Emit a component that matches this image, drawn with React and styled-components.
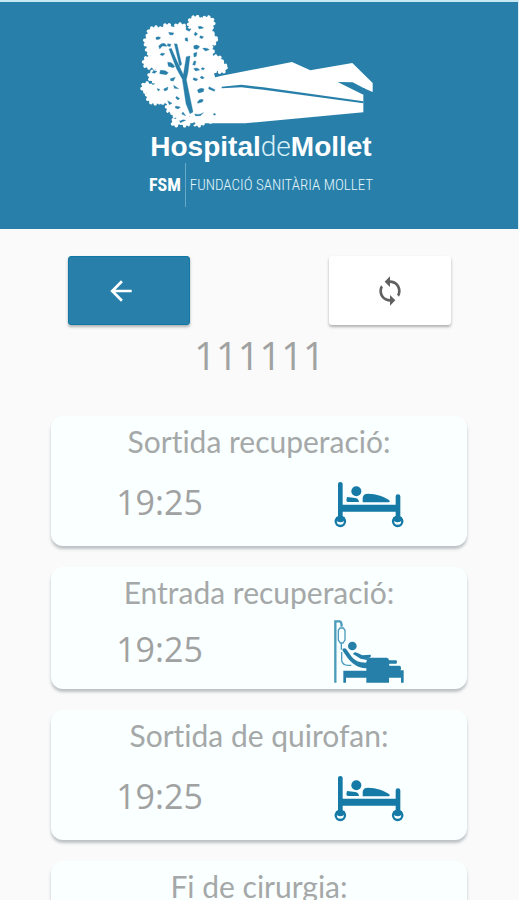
import React from "react";
import styled, { createGlobalStyle } from "styled-components";
import { MdArrowBack, MdSync } from "react-icons/md";

const GlobalStyle = createGlobalStyle`
  * { box-sizing: border-box; }
  body {
    margin: 0;
    background: #fafafa;
    color: #a5a8a8;
    font-family: Lato, "Open Sans", sans-serif;
    font-variant-ligatures: none;
  }
`;

const Screen = styled.div`
  display: flex;
  flex-direction: column;
  height: 100vh;
  overflow: hidden;
`;

const Header = styled.header`
  display: flex;
  flex-direction: column;
  align-items: center;
  padding: 13px 0 22px;
  background: #2880aa;
  border-top: 2px solid #c5e8f3;
  border-right: 1px solid #dceef4;
  color: #fff;
  font-family: "Liberation Sans", Arial, sans-serif;
`;

const Artwork = styled.svg`
  display: block;
  width: 234px;
  height: 114px;
  overflow: visible;
`;

const Brand = styled.div`
  margin-top: 2px;
  padding-left: 4px;
  font-size: 28px;
  line-height: 32px;
  font-weight: 700;
`;

const BrandLight = styled.span`
  font-family: Roboto, sans-serif;
  font-weight: 300;
  color: #d9f0f8;
`;

const Foundation = styled.div`
  display: flex;
  align-items: center;
  padding-left: 4px;
  font-family: "Roboto Condensed", "Liberation Sans Narrow", "Liberation Sans", sans-serif;
  font-size: 15px;
  font-weight: 300;
  line-height: 44px;
  color: #e4f5fb;
`;

const Initials = styled.strong`
  padding-right: 4px;
  font-size: 18px;
  font-weight: 700;
  color: #fff;
`;

const Divider = styled.span`
  width: 1px;
  height: 44px;
  margin-right: 4px;
  background: #68a9c7;
`;

const Toolbar = styled.nav`
  display: flex;
  justify-content: space-between;
  padding: 27px 68px 0;
`;

const ToolButton = styled.button`
  display: flex;
  align-items: center;
  justify-content: center;
  width: 122px;
  height: 69px;
  padding: 0 ${(p) => (p.$primary ? "16px" : "0")} 0 0;
  border: ${(p) => (p.$primary ? "1px solid #0f78a5" : "0")};
  border-radius: 3px;
  background: ${(p) => (p.$primary ? "#2880aa" : "#fff")};
  color: ${(p) => (p.$primary ? "#fff" : "#606060")};
  font-size: 32px;
  box-shadow: 0 2px 3px rgba(0, 0, 0, 0.3);
  cursor: pointer;
`;

const PatientCode = styled.h1`
  margin: 0;
  padding: 6px 0 0;
  font-family: "Open Sans", sans-serif;
  font-size: 38px;
  line-height: 48px;
  font-weight: 400;
  color: #a0a2a2;
  text-align: center;
`;

const EventList = styled.main`
  display: flex;
  flex: 1;
  flex-direction: column;
  gap: 21px;
  min-height: 0;
  padding: 37px 52px 0 51px;
  overflow-y: auto;
  scrollbar-width: none;
`;

const EventCard = styled.section`
  flex: none;
  padding-top: 6px;
  border-radius: 12px;
  background: #faffff;
  box-shadow: 0 3px 3px rgba(60, 75, 85, 0.32);
`;

const EventTitle = styled.h2`
  margin: 0;
  font-size: 30px;
  line-height: 38px;
  font-weight: 400;
  text-align: center;
`;

const EventRow = styled.div`
  display: grid;
  grid-template-columns: 1fr 1fr;
  column-gap: 12px;
  align-items: center;
  justify-items: center;
  padding: 8px 0 6px 10px;
`;

const EventTime = styled.time`
  padding-bottom: 4px;
  font-family: "Open Sans", sans-serif;
  font-size: 34px;
  line-height: 44px;
  color: #a0a2a2;
`;

const EventIcon = styled.svg`
  display: block;
  width: 72px;
  height: ${(p) => p.$height}px;
  color: #157ba6;
`;

const leafClusters = [
  [78, 107, 30], [60, 125, 20], [112, 90, 20], [150, 92, 24], [198, 72, 26], [232, 70, 23],
  [224, 100, 28], [243, 119, 20], [196, 110, 34], [150, 128, 42], [105, 138, 38], [68, 148, 22],
  [58, 187, 21], [88, 184, 29], [120, 195, 30], [225, 155, 28], [257, 188, 24], [274, 203, 18],
  [220, 200, 42], [172, 180, 52], [73, 229, 20], [105, 232, 38], [50, 263, 18], [76, 285, 30],
  [100, 275, 38], [150, 255, 48], [210, 260, 53], [127, 322, 21], [155, 318, 42], [220, 310, 44],
  [137, 367, 14], [166, 361, 20], [205, 358, 23], [242, 340, 30],
];

const leafGaps = [
  "M78 112q8-4 14 1-4 8-14 5z", "M116 97l16 2-4 6-9-1z", "M169 80l8 7 6-1-5 8-10-5z",
  "M204 80q10-4 17 4l-13 3z", "M196 96l7 6-6 5-5-3z", "M211 107l10 3-5 6-7-3z",
  "M86 138q10-12 19-7l6 8-14-1-8 9z", "M95 159l10 2-7 6-8-3z", "M113 131l10 2-3 7-8-3z",
  "M165 115l7-2 2 11-8-2z", "M191 138q9-7 18 2l-7 8-10-2z",
  "M191 160l10-3-2 12-7 2z", "M192 183l6 1-3 12-7-2z", "M218 145q12-3 20 4l-12 4z",
  "M71 212l10 2-7 6-8-2z", "M91 211q14-2 24 7l-6 6-20-3z", "M113 187q14-1 21 13l-5 3-14-4z",
  "M121 236l15-4-6 11-8-1z", "M101 267l13-6-2 9-8 3z",
  "M131 256l15 10-13-1z", "M191 206q11-6 18 4l-12 3z", "M216 203l8 2-4 5-7-3z",
  "M191 233l12 4-4 6-10-4z", "M216 228l7 6-7 3-6-5z", "M237 260l18 9-2 5-17-7z",
  "M202 271q9-10 20-4l-2 8-14 4z", "M203 305q7-10 17-6l-3 7-14 4z",
  "M140 289l9 7-5 4-7-6z", "M113 302l13 8-8 4z", "M137 318l14 3-6 6-9-3z",
  "M117 335l6 10-9-4z", "M159 336l8 11-12-5z", "M194 342q15 4 27-4l-10 9-14 1z",
  "M149 364q10-8 18-3l-16 7z", "M179 376l14-9 3 4-11 8z", "M252 340l5 2-2 4-5-2z",
  "M82 265l8 4-6 4z", "M174 280l-5 8-3-8z",
];

function HospitalArtwork() {
  return (
    <Artwork viewBox="36 45 702 342" role="img" aria-label="Hospital de Mollet">
      <path
        fill="#fff"
        d="M235 237L275 227 486 186 541 211 667 189 728 249V276L700 264V337L345 370H180V245Z"
      />
      <path fill="#2880aa" d="M623 246L668 247 708 268 700 284Z" />
      <path fill="#2880aa" d="M275 260L334 254 400 262 700 304V310L400 269 334 262 275 265Z" />
      <g fill="#fff" stroke="#fff" strokeWidth="9" strokeLinecap="round" strokeDasharray="1 13">
        {leafClusters.map(([cx, cy, r]) => (
          <circle key={`${cx}-${cy}`} cx={cx} cy={cy} r={r - 3} />
        ))}
      </g>
      <g fill="#2880aa" stroke="#2880aa" strokeWidth="1" strokeLinejoin="round">
        <path d="M117 147L124 145 141 184 160 224 169 170 180 168 174 217 169 239 189 336 180 341 168 311 157 238 139 205Z" />
        <path d="M133 131L141 132 155 193 149 199Z" />
        {leafGaps.map((d) => (
          <path key={d} d={d} />
        ))}
      </g>
    </Artwork>
  );
}

function BedIcon() {
  return (
    <EventIcon $height={72} viewBox="36 -6 216 216" aria-hidden="true">
      <g fill="currentColor">
        <path d="M51 41Q51 36 58 36T65 41V104H224V79Q224 73 231 73T238 79V141H224V125H65V141H51Z" />
        <circle cx="106" cy="64" r="15" />
        <path d="M78 81L103 84Q113 86 114 96H81Q76 96 76 91Z" />
        <path d="M125 97V84Q126 71 141 71C166 71 191 80 206 92Q208 97 202 97Z" />
      </g>
      <g fill="#faffff" stroke="currentColor" strokeWidth="7">
        <circle cx="58" cy="154" r="14" />
        <circle cx="230" cy="154" r="14" />
      </g>
      <path fill="currentColor" d="M45 141H71V150Q67 157 58 157T45 150ZM217 141H243V150Q239 157 230 157T217 150Z" />
    </EventIcon>
  );
}

function RecoveryIcon() {
  return (
    <EventIcon $height={64} viewBox="36 26 216 192" aria-hidden="true">
      <g fill="none" stroke="#4c9bbc">
        <path strokeWidth="7" d="M43 217V33H56Q62 34 62 49" />
        <path strokeWidth="4" d="M57 53H67L72 60V89L66 98H58L52 89V60ZM61 98V118M62 125V151Q65 165 81 165H91" />
      </g>
      <g fill="#267fa9">
        <circle cx="94" cy="107" r="13" />
        <path d="M96 131Q99 123 108 127L124 135 148 133Q153 138 145 142L132 146 147 142H198Q204 144 204 150H226Q231 155 226 160H205V166H237Q243 172 238 180H248V217H240V202H204V217H136V202H75V217H67V181H136V174C108 173 91 157 80 143L64 120Q64 111 75 115L91 138C103 153 113 156 135 157L138 149 119 145Z" />
      </g>
      <path d="M205 163H235M90 170Q104 178 134 178" stroke="#faffff" strokeWidth="3" fill="none" />
    </EventIcon>
  );
}

const events = [
  { title: "Sortida recuperació:", time: "19:25", Icon: BedIcon },
  { title: "Entrada recuperació:", time: "19:25", Icon: RecoveryIcon },
  { title: "Sortida de quirofan:", time: "19:25", Icon: BedIcon },
  { title: "Fi de cirurgia:", time: "", Icon: BedIcon },
];

export default function App() {
  return (
    <>
      <GlobalStyle />
      <Screen>
        <Header>
          <HospitalArtwork />
          <Brand>
            Hospital<BrandLight>de</BrandLight>Mollet
          </Brand>
          <Foundation>
            <Initials>FSM</Initials>
            <Divider />
            <span>FUNDACIÓ SANITÀRIA MOLLET</span>
          </Foundation>
        </Header>
        <Toolbar>
          <ToolButton type="button" $primary aria-label="Enrere">
            <MdArrowBack />
          </ToolButton>
          <ToolButton type="button" aria-label="Actualitza">
            <MdSync />
          </ToolButton>
        </Toolbar>
        <PatientCode>111111</PatientCode>
        <EventList>
          {events.map(({ title, time, Icon }) => (
            <EventCard key={title}>
              <EventTitle>{title}</EventTitle>
              <EventRow>
                <EventTime>{time}</EventTime>
                <Icon />
              </EventRow>
            </EventCard>
          ))}
        </EventList>
      </Screen>
    </>
  );
}
